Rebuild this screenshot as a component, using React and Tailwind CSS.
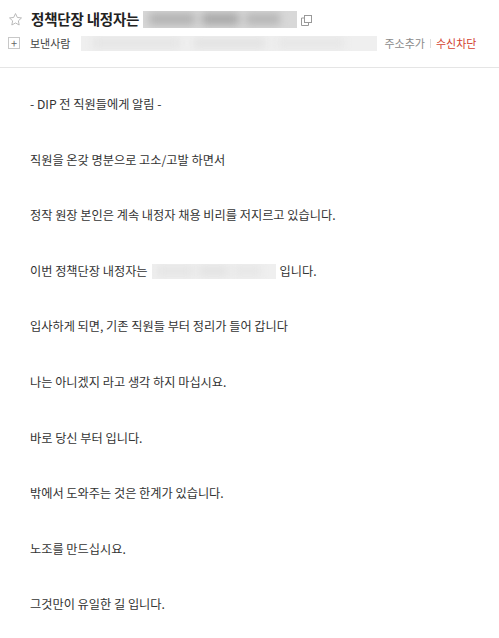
import React from 'react';

const FONT = { fontFamily: '"Noto Sans CJK KR", "Noto Sans", sans-serif' };

const LINES = [
  '- DIP 전 직원들에게 알림 -',
  '직원을 온갖 명분으로 고소/고발 하면서',
  '정작 원장 본인은 계속 내정자 채용 비리를 저지르고 있습니다.',
  null,
  '입사하게 되면, 기존 직원들 부터 정리가 들어 갑니다',
  '나는 아니겠지 라고 생각 하지 마십시요.',
  '바로 당신 부터 입니다.',
  '밖에서 도와주는 것은 한계가 있습니다.',
  '노조를 만드십시요.',
  '그것만이 유일한 길 입니다.',
];

// blurred redaction block
function Redacted({ className, dark }) {
  return (
    <span className={`relative inline-block overflow-hidden ${className}`}>
      <span className={`absolute inset-0 ${dark ? 'bg-[#d8d8d8]' : 'bg-[#efefef]'}`} />
      <span className="absolute inset-0 flex items-center gap-[5%] px-[4%] blur-[4px]">
        <span className={`h-[65%] w-[32%] ${dark ? 'bg-[#b2b2b2]' : 'bg-[#e4e4e4]'}`} />
        <span className={`h-[65%] w-[26%] ${dark ? 'bg-[#a8a8a8]' : 'bg-[#e2e2e2]'}`} />
        <span className={`h-[65%] w-[24%] ${dark ? 'bg-[#b6b6b6]' : 'bg-[#e6e6e6]'}`} />
      </span>
    </span>
  );
}

export default function App() {
  return (
    <div className="w-[499px] h-[638px] bg-white text-[#333] overflow-hidden" style={FONT}>
      {/* Header */}
      <div className="border-b border-[#e5e5e5] h-[68px]">
        <div className="flex items-center h-[36px] pt-[2px]">
          <svg width="15" height="15" viewBox="0 0 24 24" className="ml-[8px] mr-[8px]" fill="none" stroke="#b5b5b5" strokeWidth="1.5" strokeLinejoin="round">
            <path d="M12 2.5l2.9 6.2 6.7.8-5 4.6 1.3 6.7L12 17.5l-5.9 3.3 1.3-6.7-5-4.6 6.7-.8z" />
          </svg>
          <h1 className="text-[14.5px] font-bold text-[#222] tracking-[-0.2px] leading-none">정책단장 내정자는</h1>
          <Redacted dark className="ml-[4px] w-[154px] h-[17px]" />
          <svg width="11" height="11" viewBox="0 0 11 11" className="ml-[4px] mt-[2px]" fill="none" stroke="#999" strokeWidth="1">
            <rect x="3.5" y="0.5" width="7" height="7" />
            <path d="M3.5 3H0.5V10.5H7.5V7.5" />
          </svg>
        </div>
        <div className="flex items-center h-[18px] mt-[-2px]">
          <span className="ml-[8px] mr-[10px] w-[12px] h-[12px] border border-[#c8c8c8] flex items-center justify-center text-[#666] text-[11px] leading-none">+</span>
          <span className="text-[11px] text-[#444]">보낸사람</span>
          <Redacted className="ml-[11px] w-[296px] h-[15px]" />
          <span className="ml-[7px] text-[11px] text-[#8a8a8a]">주소추가</span>
          <span className="mx-[5px] w-px h-[9px] bg-[#ddd]" />
          <span className="text-[11px] text-[#d2422f]">수신차단</span>
        </div>
      </div>

      {/* Body */}
      <div className="pl-[30px] pt-[27px]">
        {LINES.map((line, i) => (
          <p key={i} className="text-[12.2px] leading-[18.5px] mb-[37.1px] whitespace-nowrap flex items-center">
            {line ?? (
              <>
                이번 정책단장 내정자는
                <Redacted className="mx-[4px] w-[124px] h-[15px]" />
                입니다.
              </>
            )}
          </p>
        ))}
      </div>
    </div>
  );
}
